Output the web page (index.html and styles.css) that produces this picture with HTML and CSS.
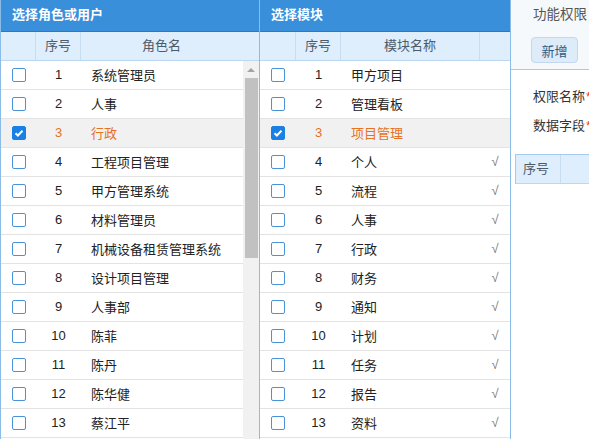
FILE: index.html
```html
<!DOCTYPE html>
<html lang="zh-CN">
<head>
    <meta charset="UTF-8">
    <meta name="viewport" content="width=device-width, initial-scale=1.0">
    <title>权限配置</title>
    <link rel="stylesheet" href="styles.css">
</head>
<body>
    <div class="app">

        <!-- Roles / users -->
        <div class="panel roles">
            <div class="panel-title">选择角色或用户</div>
            <div class="grid-head">
                <span class="c-check"></span>
                <span class="c-no">序号</span>
                <span class="c-name">角色名</span>
            </div>
            <div class="grid-body">
                <div class="rows">
                    <div class="row"><span class="c-check"><i class="box"></i></span><span class="c-no">1</span><span class="c-name">系统管理员</span></div>
                    <div class="row"><span class="c-check"><i class="box"></i></span><span class="c-no">2</span><span class="c-name">人事</span></div>
                    <div class="row selected"><span class="c-check"><i class="box checked"></i></span><span class="c-no">3</span><span class="c-name">行政</span></div>
                    <div class="row"><span class="c-check"><i class="box"></i></span><span class="c-no">4</span><span class="c-name">工程项目管理</span></div>
                    <div class="row"><span class="c-check"><i class="box"></i></span><span class="c-no">5</span><span class="c-name">甲方管理系统</span></div>
                    <div class="row"><span class="c-check"><i class="box"></i></span><span class="c-no">6</span><span class="c-name">材料管理员</span></div>
                    <div class="row"><span class="c-check"><i class="box"></i></span><span class="c-no">7</span><span class="c-name">机械设备租赁管理系统</span></div>
                    <div class="row"><span class="c-check"><i class="box"></i></span><span class="c-no">8</span><span class="c-name">设计项目管理</span></div>
                    <div class="row"><span class="c-check"><i class="box"></i></span><span class="c-no">9</span><span class="c-name">人事部</span></div>
                    <div class="row"><span class="c-check"><i class="box"></i></span><span class="c-no">10</span><span class="c-name">陈菲</span></div>
                    <div class="row"><span class="c-check"><i class="box"></i></span><span class="c-no">11</span><span class="c-name">陈丹</span></div>
                    <div class="row"><span class="c-check"><i class="box"></i></span><span class="c-no">12</span><span class="c-name">陈华健</span></div>
                    <div class="row"><span class="c-check"><i class="box"></i></span><span class="c-no">13</span><span class="c-name">蔡江平</span></div>
                </div>
                <div class="scrollbar">
                    <div class="scroll-up"></div>
                    <div class="scroll-thumb"></div>
                </div>
            </div>
        </div>

        <!-- Modules -->
        <div class="panel modules">
            <div class="panel-title">选择模块</div>
            <div class="grid-head">
                <span class="c-check"></span>
                <span class="c-no">序号</span>
                <span class="c-name">模块名称</span>
                <span class="c-flag"></span>
            </div>
            <div class="rows">
                <div class="row"><span class="c-check"><i class="box"></i></span><span class="c-no">1</span><span class="c-name">甲方项目</span><span class="c-flag"></span></div>
                <div class="row"><span class="c-check"><i class="box"></i></span><span class="c-no">2</span><span class="c-name">管理看板</span><span class="c-flag"></span></div>
                <div class="row selected"><span class="c-check"><i class="box checked"></i></span><span class="c-no">3</span><span class="c-name">项目管理</span><span class="c-flag"></span></div>
                <div class="row"><span class="c-check"><i class="box"></i></span><span class="c-no">4</span><span class="c-name">个人</span><span class="c-flag">√</span></div>
                <div class="row"><span class="c-check"><i class="box"></i></span><span class="c-no">5</span><span class="c-name">流程</span><span class="c-flag">√</span></div>
                <div class="row"><span class="c-check"><i class="box"></i></span><span class="c-no">6</span><span class="c-name">人事</span><span class="c-flag">√</span></div>
                <div class="row"><span class="c-check"><i class="box"></i></span><span class="c-no">7</span><span class="c-name">行政</span><span class="c-flag">√</span></div>
                <div class="row"><span class="c-check"><i class="box"></i></span><span class="c-no">8</span><span class="c-name">财务</span><span class="c-flag">√</span></div>
                <div class="row"><span class="c-check"><i class="box"></i></span><span class="c-no">9</span><span class="c-name">通知</span><span class="c-flag">√</span></div>
                <div class="row"><span class="c-check"><i class="box"></i></span><span class="c-no">10</span><span class="c-name">计划</span><span class="c-flag">√</span></div>
                <div class="row"><span class="c-check"><i class="box"></i></span><span class="c-no">11</span><span class="c-name">任务</span><span class="c-flag">√</span></div>
                <div class="row"><span class="c-check"><i class="box"></i></span><span class="c-no">12</span><span class="c-name">报告</span><span class="c-flag">√</span></div>
                <div class="row"><span class="c-check"><i class="box"></i></span><span class="c-no">13</span><span class="c-name">资料</span><span class="c-flag">√</span></div>
            </div>
        </div>

        <!-- Function permissions -->
        <div class="panel perms">
            <div class="perms-title">功能权限</div>
            <div class="toolbar">
                <button class="btn">新增</button>
            </div>
            <div class="form">
                <div class="form-row">权限名称<span class="req">*</span></div>
                <div class="form-row">数据字段<span class="req">*</span></div>
            </div>
            <div class="perm-table">
                <div class="perm-head">
                    <span class="p-no">序号</span>
                    <span class="p-rest"></span>
                </div>
            </div>
        </div>

    </div>
</body>
</html>
```

FILE: styles.css
```css
/* Global */
html, body {
    margin: 0;
    padding: 0;
    height: 100%;
    overflow: hidden;
    background: #fff;
    font-family: 'Liberation Sans', 'Noto Sans CJK SC', sans-serif;
    font-size: 13px;
    color: #222;
}

.app {
    display: flex;
    height: 100vh;
    overflow: hidden;
}

/* Panels */
.panel {
    display: flex;
    flex-direction: column;
    overflow: hidden;
    box-sizing: border-box;
}

.roles {
    width: 260px;
    border-left: 1px solid #8bbce8;
    border-right: 1px solid #8bbce8;
}

.modules {
    width: 251px;
    border-right: 1px solid #8bbce8;
}

.perms {
    flex: 1;
    min-width: 0;
}

.panel-title {
    height: 31px;
    line-height: 29px;
    padding-left: 11px;
    background: #3a8fda;
    border-bottom: 1px solid #2679c6;
    color: #fff;
    font-weight: bold;
    font-size: 13px;
    white-space: nowrap;
}

/* Column header */
.grid-head {
    display: flex;
    height: 29px;
    box-sizing: border-box;
    background: #deeefc;
    border-bottom: 1px solid #bcd8f1;
    color: #4d5b69;
    line-height: 27px;
}

.grid-head span {
    box-sizing: border-box;
    text-align: center;
}

.grid-head .c-check,
.grid-head .c-no {
    border-right: 1px solid #c7ddf1;
}

.c-check {
    width: 35px;
    flex: none;
    display: flex;
    align-items: center;
    justify-content: center;
}

.c-no {
    width: 45px;
    flex: none;
    text-align: center;
}

.roles .grid-head .c-name {
    width: 161px;
    flex: none;
}

.modules .grid-head .c-check {
    width: 36px;
}

.modules .grid-head .c-name {
    width: 139px;
    flex: none;
    border-right: 1px solid #c7ddf1;
}

.c-flag {
    width: 30px;
    flex: none;
    text-align: center;
    color: #777;
}

/* Rows */
.grid-body {
    display: flex;
    flex: 1;
    min-height: 0;
}

.rows {
    flex: 1;
    overflow: hidden;
}

.row {
    display: flex;
    align-items: center;
    height: 29px;
    padding-bottom: 1px;
    box-sizing: border-box;
    border-bottom: 1px solid #e3e3e3;
    white-space: nowrap;
}

.row .c-check {
    margin-top: 1px;
}

.row .c-name {
    flex: 1;
    padding-left: 10px;
    min-width: 0;
}

.modules .row .c-check {
    width: 36px;
}

.modules .row .c-name {
    width: 139px;
    flex: none;
    box-sizing: border-box;
}

.row.selected {
    background: #f1f1f1;
    color: #e6721f;
}

/* Checkbox */
.box {
    display: block;
    width: 14px;
    height: 14px;
    box-sizing: border-box;
    border: 1px solid #4b93d8;
    border-radius: 2px;
    background: #fff;
}

.box.checked {
    background: #1a80e3 url("data:image/svg+xml;utf8,<svg xmlns='http://www.w3.org/2000/svg' viewBox='0 0 14 14'><path d='M3.5 7.2l2.4 2.3 4.6-4.8' fill='none' stroke='white' stroke-width='2'/></svg>") center / 14px no-repeat;
    border-color: #1a80e3;
}

/* Fake vertical scrollbar */
.scrollbar {
    width: 16px;
    flex: none;
    background: #f1f1f1;
    display: flex;
    flex-direction: column;
    align-items: center;
}

.scroll-up {
    margin-top: 7px;
    width: 0;
    height: 0;
    border-left: 4px solid transparent;
    border-right: 4px solid transparent;
    border-bottom: 4px solid #a3a3a3;
}

.scroll-thumb {
    margin-top: 6px;
    margin-left: 1px;
    width: 13px;
    height: 180px;
    background: #c1c1c1;
}

/* Function permissions */
.perms-title {
    height: 31px;
    line-height: 29px;
    padding-left: 22px;
    background: #f6f9fc;
    color: #555;
    font-size: 13.5px;
    white-space: nowrap;
}

.toolbar {
    height: 39px;
    padding: 6px 0 0 20px;
    box-sizing: border-box;
    background: #f6f9fc;
    border-bottom: 1px solid #a6caec;
}

.btn {
    width: 47px;
    height: 26px;
    padding: 0;
    background: #deebf8;
    border: 1px solid #c3d8ee;
    border-radius: 4px;
    color: #2f5c86;
    font-family: 'Noto Sans CJK SC', sans-serif;
    font-size: 13px;
}

.form {
    padding: 12px 0 0 22px;
}

.form-row {
    height: 29px;
    line-height: 29px;
    white-space: nowrap;
    color: #333;
}

.req {
    color: #e23b2e;
    margin-left: 1px;
}

.perm-table {
    margin: 14px 0 0 4px;
    border-left: 1px solid #a6caec;
    border-top: 1px solid #a6caec;
}

.perm-head {
    display: flex;
    height: 28px;
    line-height: 27px;
    background: #deeefc;
    border-bottom: 1px solid #bcd8f1;
    color: #4d5b69;
}

.p-no {
    width: 45px;
    flex: none;
    padding-left: 7px;
    box-sizing: border-box;
    border-right: 1px solid #c7ddf1;
}

.p-rest {
    flex: 1;
}
```
